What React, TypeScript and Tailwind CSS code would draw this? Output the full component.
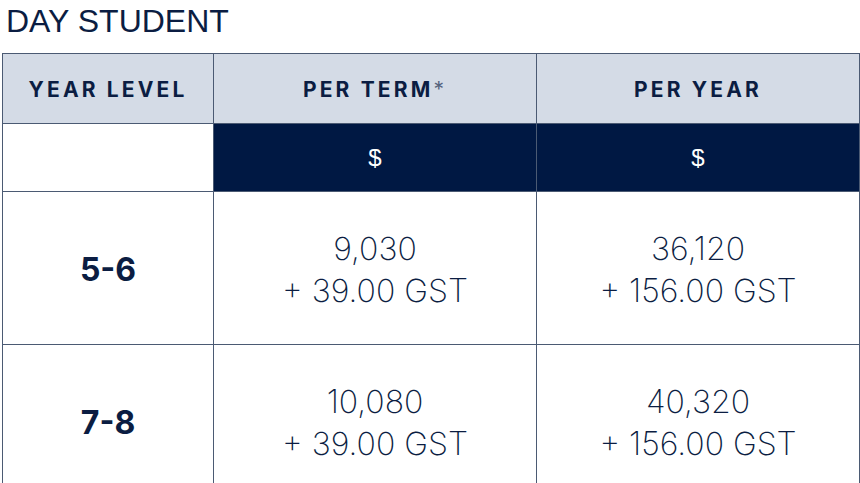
const rows = [
  { level: "5-6", term: "9,030", termGst: "+ 39.00 GST", year: "36,120", yearGst: "+ 156.00 GST" },
  { level: "7-8", term: "10,080", termGst: "+ 39.00 GST", year: "40,320", yearGst: "+ 156.00 GST" },
];

const App = () => {
  return (
    <div className="w-[860px] h-[483px] overflow-hidden bg-white text-[#0b1d42] font-['Inter','Liberation_Sans',sans-serif]">
      <h1 className="pl-[6px] pt-[2px] h-[53px] text-[32px] leading-[38px] font-['Liberation_Sans',Arial,sans-serif] text-[#0b1d42]">
        DAY STUDENT
      </h1>
      <table className="ml-[2px] w-[857px] border-collapse table-fixed">
        <colgroup>
          <col className="w-[211px]" />
          <col className="w-[323px]" />
          <col className="w-[323px]" />
        </colgroup>
        <thead>
          <tr className="h-[70px] bg-[#d4dbe6]">
            <th className="border border-[#4b5a73] pt-[2px] text-[21px] font-bold tracking-[0.15em] text-center">YEAR LEVEL</th>
            <th className="border border-[#4b5a73] pt-[2px] text-[21px] font-bold tracking-[0.15em] text-center">
              PER TERM<span className="font-normal text-[#56647e]">*</span>
            </th>
            <th className="border border-[#4b5a73] pt-[2px] text-[21px] font-bold tracking-[0.15em] text-center">PER YEAR</th>
          </tr>
        </thead>
        <tbody>
          <tr className="h-[68px]">
            <td className="border border-[#4b5a73] bg-white"></td>
            <td className="border border-[#4b5a73] bg-[#001843] text-white text-center text-[24px] font-['Liberation_Sans',sans-serif]">$</td>
            <td className="border border-[#4b5a73] bg-[#001843] text-white text-center text-[24px] font-['Liberation_Sans',sans-serif]">$</td>
          </tr>
          {rows.map((r) => (
            <tr key={r.level} className="h-[153px]">
              <td className="border border-[#4b5a73] pt-[4px] text-center text-[32px] font-bold">{r.level}</td>
              <td className="border border-[#4b5a73] pt-[3px] text-center text-[32px] font-extralight leading-[42px]">
                <div>{r.term}</div>
                <div>{r.termGst}</div>
              </td>
              <td className="border border-[#4b5a73] pt-[3px] text-center text-[32px] font-extralight leading-[42px]">
                <div>{r.year}</div>
                <div>{r.yearGst}</div>
              </td>
            </tr>
          ))}
        </tbody>
      </table>
    </div>
  );
};

export default App;
